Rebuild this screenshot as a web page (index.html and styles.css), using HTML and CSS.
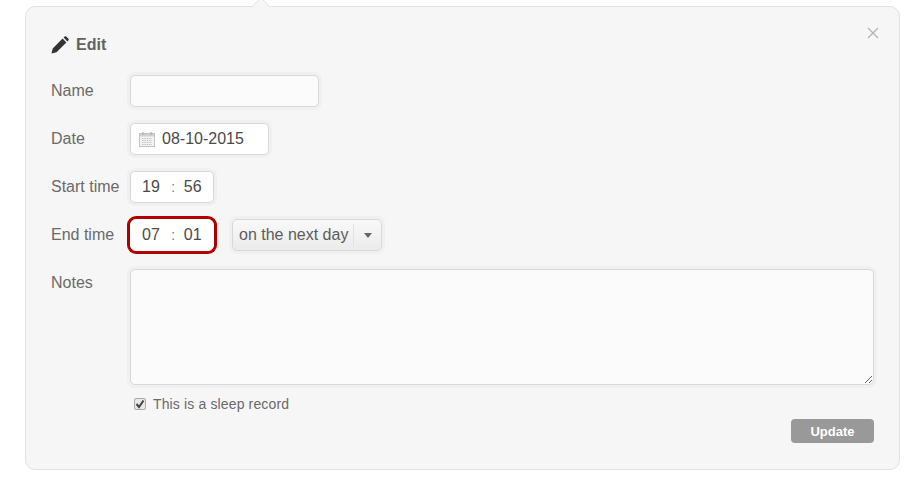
FILE: index.html
```html
<!DOCTYPE html>
<html lang="en">
<head>
    <meta charset="UTF-8">
    <meta name="viewport" content="width=device-width, initial-scale=1.0">
    <title>Edit record</title>
    <link rel="stylesheet" href="styles.css">
</head>
<body>
    <div class="panel">
        <span class="arrow"></span>
        <svg class="close" width="12" height="12" viewBox="0 0 12 12"><path d="M1 1l10 10M11 1L1 11" stroke="#b4b4b4" stroke-width="1.3" fill="none"/></svg>
        <h1 class="title">
            <svg class="pencil" width="18" height="18" viewBox="0 0 18 18"><path d="M0.5 17.5l1.2-5L11.6 2.6l3.8 3.8-9.9 9.9zM12.6 1.6l1-1c.5-.5 1.1-.5 1.6 0l2.2 2.2c.5.5.5 1.1 0 1.6l-1 1z" fill="#333"/></svg>
            Edit
        </h1>
        <form>
            <div class="row">
                <label class="label">Name</label>
                <input class="field name-field" type="text">
            </div>
            <div class="row">
                <label class="label">Date</label>
                <div class="field date-field">
                    <svg class="calendar" width="16" height="16" viewBox="0 0 16 16">
                        <rect x="0.5" y="2.5" width="15" height="13" fill="#f4f4f4" stroke="#c4c4c4"/>
                        <rect x="1" y="3" width="14" height="2.5" fill="#cfcfcf"/>
                        <path d="M4 1v3M12 1v3" stroke="#b5b5b5" stroke-width="1.4"/>
                        <path d="M3 7.5h10M3 9.5h10M3 11.5h10M3 13.5h10" stroke="#bdbdbd" stroke-dasharray="1.4 1"/>
                    </svg>
                    08-10-2015
                </div>
            </div>
            <div class="row">
                <label class="label">Start time</label>
                <div class="field time-field"><span>19</span><span class="colon">:</span><span>56</span></div>
            </div>
            <div class="row end-row">
                <label class="label">End time</label>
                <div class="field time-field highlighted"><span>07</span><span class="colon">:</span><span>01</span></div>
                <div class="dropdown">
                    <span class="dropdown-text">on the next day</span>
                    <span class="dropdown-caret"></span>
                </div>
            </div>
            <div class="row notes-row">
                <label class="label">Notes</label>
                <textarea class="field notes"></textarea>
            </div>
            <label class="check-row">
                <span class="checkbox">
                    <svg width="10" height="10" viewBox="0 0 10 10"><path d="M1.5 5l2.5 3 4.5-6.5" stroke="#444" stroke-width="2" fill="none"/></svg>
                </span>
                This is a sleep record
            </label>
            <div class="actions">
                <button class="update" type="button">Update</button>
            </div>
        </form>
    </div>
</body>
</html>
```

FILE: styles.css
```css
body {
    margin: 0;
    background: #fff;
    font-family: "Liberation Sans", Arial, sans-serif;
    font-size: 16px;
    color: #6a6a6a;
}
.panel {
    position: relative;
    box-sizing: border-box;
    width: 875px;
    height: 464px;
    margin: 6px 0 0 25px;
    padding: 0 25px;
    background: #f6f6f6;
    border: 1px solid #e2e2e2;
    border-radius: 10px;
}
.arrow {
    position: absolute;
    top: -7px;
    left: 228px;
    width: 13px;
    height: 13px;
    background: #f6f6f6;
    border-top: 1px solid #e8e8e8;
    border-left: 1px solid #e8e8e8;
    transform: rotate(45deg);
}
.close {
    position: absolute;
    top: 20px;
    right: 20px;
}
.title {
    display: flex;
    align-items: center;
    gap: 7px;
    height: 18px;
    margin: 29px 0 0;
    font-size: 16px;
    font-weight: bold;
    color: #626262;
}
.pencil {
    margin-top: -1px;
}
.row {
    display: flex;
    align-items: flex-start;
    margin-top: 16px;
}
form .row:first-child {
    margin-top: 21px;
}
.label {
    width: 79px;
    line-height: 32px;
    flex: none;
}
.field {
    box-sizing: border-box;
    height: 32px;
    margin: 0;
    background: #fbfbfb;
    border: 1px solid #d8d8d8;
    border-radius: 5px;
    box-shadow: 0 0 0 3px #f0f0f0;
    font: 16px "Liberation Sans", Arial, sans-serif;
    color: #4a4a4a;
}
.name-field {
    width: 189px;
}
.date-field {
    display: flex;
    align-items: center;
    width: 139px;
    padding-left: 8px;
    gap: 7px;
    background: #fff;
}
.time-field {
    display: flex;
    align-items: center;
    width: 84px;
    padding-left: 11px;
    background: #fff;
}
.colon {
    width: 15px;
    margin: 0 3px 0 6px;
    text-align: center;
    font-size: 14px;
    color: #777;
}
.highlighted {
    border-color: #fff;
    border-radius: 6px;
    box-shadow: 0 0 0 3px #b20000;
}
.dropdown {
    box-sizing: border-box;
    display: flex;
    align-items: center;
    height: 32px;
    width: 150px;
    margin-left: 18px;
    padding-left: 6px;
    background: linear-gradient(#f9f9f9, #ebebeb);
    border: 1px solid #d8d8d8;
    border-radius: 5px;
    box-shadow: 0 0 0 3px #f0f0f0;
    color: #5c5c5c;
}
.dropdown-text {
    width: 114px;
    line-height: 22px;
    border-right: 1px solid #e2e2e2;
    white-space: nowrap;
}
.dropdown-caret {
    width: 0;
    height: 0;
    margin-left: 10px;
    border-top: 5px solid #666;
    border-left: 4px solid transparent;
    border-right: 4px solid transparent;
}
.notes-row {
    margin-top: 18px;
}
.notes-row .label {
    line-height: 28px;
}
.notes {
    width: 744px;
    height: 116px;
    display: block;
}
.check-row {
    display: flex;
    align-items: center;
    gap: 7px;
    margin: 10px 0 0 83px;
    height: 18px;
    font-size: 14px;
    letter-spacing: 0.14px;
}
.checkbox {
    box-sizing: border-box;
    display: flex;
    align-items: center;
    justify-content: center;
    width: 12px;
    height: 12px;
    background: #e8e8e8;
    border: 1px solid #aaa;
    border-radius: 2px;
}
.actions {
    display: flex;
    justify-content: flex-end;
    margin-top: 6px;
}
.update {
    width: 83px;
    height: 24px;
    padding: 0;
    background: #999;
    border: none;
    border-radius: 4px;
    font: bold 13px "Liberation Sans", Arial, sans-serif;
    color: #fff;
}
```
